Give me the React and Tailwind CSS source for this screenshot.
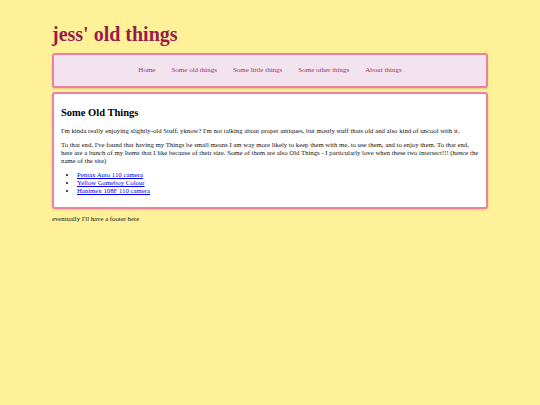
export default function App() {
  const links = ['Home', 'Some old things', 'Some little things', 'Some other things', 'About things']
  const things = ['Pentax Auto 110 camera', 'Yellow Gameboy Colour', 'Hanimex 108F 110 camera']
  return (
    <div className="min-h-[405px] w-[540px] bg-[#fff197] font-['Liberation_Serif',serif] text-black">
      <div className="px-[52px] pt-[22px]">
        <h1 className="text-[20px] leading-[24px] font-bold text-[#951d4b]">jess' old things</h1>
        <nav className="mt-[7px] h-[35px] rounded-[3px] border-2 border-[#ef7fa0] bg-[#f3e3ef] shadow-[0_1px_2px_rgba(0,0,0,0.15)] flex items-center justify-center gap-[16px] text-[7px] text-[#a0306a]">
          {links.map((l) => (
            <a key={l} href="#" className="no-underline">{l}</a>
          ))}
        </nav>
        <main className="mt-[4px] rounded-[3px] border-2 border-[#ef7fa0] bg-white shadow-[0_1px_2px_rgba(0,0,0,0.15)] pl-[7px] pr-[7px] pt-[12px] pb-[12px] text-[6.75px] leading-[8px] text-[#111]">
          <h2 className="text-[10.5px] leading-[14px] font-bold text-black">Some Old Things</h2>
          <p className="mt-[7px]">I'm kinda really enjoying slightly-old Stuff, yknow? I'm not talking about proper antiques, but mostly stuff thats old and also kind of uncool with it.</p>
          <p className="mt-[6px]">To that end, I've found that having my Things be small means I am way more likely to keep them with me, to use them, and to enjoy them. To that end, here are a bunch of my Items that I like because of their size. Some of them are also Old Things - I particularly love when these two intersect!!! (hence the name of the site)</p>
          <ul className="mt-[6px] list-disc pl-[16px] marker:text-[7px]">
            {things.map((t) => (
              <li key={t}><a href="#" className="text-[#0000ee] underline">{t}</a></li>
            ))}
          </ul>
        </main>
        <p className="mt-[6px] text-[6.75px] leading-[8px] text-[#111]">eventually I'll have a footer here</p>
      </div>
    </div>
  )
}
